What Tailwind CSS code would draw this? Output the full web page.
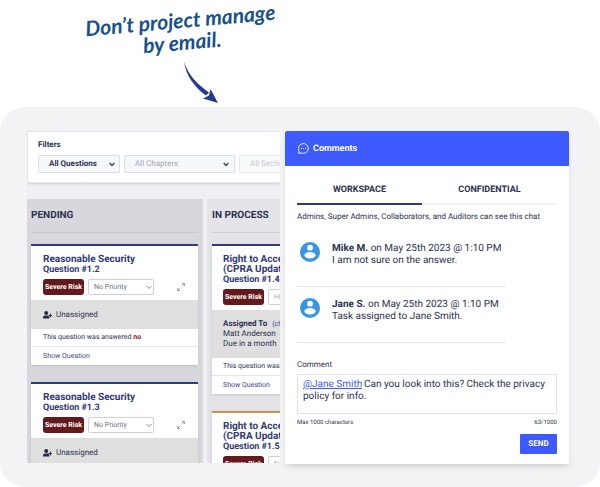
<!DOCTYPE html>
<html lang="en">

<head>
  <meta charset="UTF-8">
  <meta name="viewport" content="width=device-width, initial-scale=1">
  <title>Comments</title>
  <script src="https://cdn.jsdelivr.net/npm/@tailwindcss/browser@4"></script>
</head>

<body class="bg-white font-['Roboto',sans-serif] text-[#2b3150] **:[text-rendering:geometricPrecision]">

  <!-- Callout -->
  <header class="flex h-[107px] w-full max-w-[362px] flex-col items-center pt-[10px]">
    <h1 class="-rotate-5 text-center font-['Lato',sans-serif] text-[21px] leading-[22px] font-bold text-[#17508f] italic">
      Don’t project manage<br>by email.
    </h1>
    <svg class="mt-[8px] ml-[40px] h-[42px] w-[36px]" viewBox="0 0 36 42" fill="none">
      <path d="M1 0C3 13 11 25 23 33.500L26 30.500C14 22 6 14 1 0Z" fill="#233a8f" />
      <path d="M35 41L27.500 27L26 33.500L20 36.500Z" fill="#233a8f" />
    </svg>
  </header>

  <!-- Main Content -->
  <main class="grid grid-cols-[minmax(0,253fr)_minmax(0,284fr)] gap-[5px] rounded-[25px] bg-[#f3f3f5] pt-[24px] pr-[31px] pb-[23px] pl-[27px]">

    <!-- Board -->
    <section class="max-h-[332px] overflow-hidden bg-[#f0f0f4]">
      <form class="overflow-hidden border border-r-0 border-[#e4e4ea] bg-white pt-[8px] pb-[9px] pl-[10px] shadow-sm">
        <h2 class="text-[8px] leading-[10px] font-bold">Filters</h2>
        <div class="mt-[5px] flex w-[320px] gap-[4px]">
          <div class="relative w-[82px]">
            <select aria-label="Questions" class="block h-[18px] w-full appearance-none rounded-[2px] border border-[#dcdde6] bg-[#f6f7fa] pl-[10px] text-[8px] font-bold">
              <option>All Questions</option>
            </select>
            <svg class="pointer-events-none absolute top-[7px] right-[5px] h-[5px] w-[6px]" viewBox="0 0 6 5" fill="none" stroke="#3a4060" stroke-width="1.300"><path d="M.700 1L3 3.500L5.300 1" /></svg>
          </div>
          <div class="relative w-[111px]">
            <select aria-label="Chapters" class="block h-[18px] w-full appearance-none rounded-[2px] border border-[#dcdde6] bg-[#f6f7fa] pl-[10px] text-[8px] text-[#a5a7b8]">
              <option>All Chapters</option>
            </select>
            <svg class="pointer-events-none absolute top-[7px] right-[6px] h-[5px] w-[6px]" viewBox="0 0 6 5" fill="none" stroke="#3a4060" stroke-width="1.300"><path d="M.700 1L3 3.500L5.300 1" /></svg>
          </div>
          <select aria-label="Sections" class="block h-[18px] w-[111px] appearance-none rounded-[2px] border border-[#e6e7ee] bg-[#f8f9fb] pl-[10px] text-[8px] text-[#c6c8d3]">
            <option>All Sections</option>
          </select>
        </div>
      </form>

      <div class="mt-[16px] flex w-[358px] gap-[4px]">

        <!-- Pending -->
        <div class="w-[176px] bg-[#d7d7dc] pr-[5px] pb-4 pl-[4px]">
          <h2 class="h-[34px] border-b border-[#c8c8cf] text-[10px] leading-[33px] font-bold">PENDING</h2>

          <article class="mt-[11px] border-t-2 border-[#2f3c80] bg-white shadow-sm">
            <div class="px-[12px] pt-[9px] pb-[5px]">
              <h3 class="text-[10px] leading-[10px] font-bold text-[#2f3878]">Reasonable Security</h3>
              <p class="text-[9px] leading-[10px] font-bold text-[#2f3878]">Question #1.2</p>
              <div class="mt-[4px] flex items-center">
                <span class="h-[16px] w-[41px] rounded-[3px] bg-[#641a1c] text-center text-[7px] leading-[16px] font-bold text-white">Severe Risk</span>
                <div class="relative ml-[4px] w-[66px]">
                  <select aria-label="Priority of question 1.2" class="block h-[16px] w-full appearance-none rounded-[2px] border border-[#cfd0dc] bg-white pl-[5px] text-[7px] text-[#6b6e80]">
                    <option>No Priority</option>
                  </select>
                  <svg class="pointer-events-none absolute top-[6px] right-[2px] h-[5px] w-[6px]" viewBox="0 0 6 5" fill="none" stroke="#8a8c9c"><path d="M.500 1L3 3.500L5.500 1" /></svg>
                </div>
                <svg class="mr-px ml-auto h-[8px] w-[8px]" viewBox="0 0 8 8" fill="none" stroke="#7d88b4" stroke-width=".8"><path d="M5 .500H7.500V3M7.500 .500L4.800 3.200M.500 5V7.500H3M.500 7.500L3.200 4.800" /></svg>
              </div>
            </div>
            <p class="flex h-[29px] items-center gap-[4px] bg-[#dfdfdf] px-[12px] text-[8px]">
              <svg class="h-[8px] w-[9px]" viewBox="0 0 9 8" fill="#262b45"><circle cx="3.200" cy="2.100" r="2" /><path d="M0 7.500V6.500C0 5 1.200 4.500 3.200 4.500S6.300 5 6.300 6.500V7.500ZM6.800 2.500H7.800V4H9V5H7.800V6.500H6.800V5H5.600V4H6.800Z" /></svg>
              Unassigned
            </p>
            <p class="h-[18px] border-b border-[#e6e6ea] px-[12px] text-[7px] leading-[17px]">This question was answered <b class="text-[#7a2022]">no</b></p>
            <a href="#" class="block h-[18px] px-[12px] text-[7px] leading-[18px] text-[#3b4688]">Show Question</a>
          </article>

          <article class="mt-[17px] border-t-2 border-[#2f3c80] bg-white shadow-sm">
            <div class="px-[12px] pt-[9px] pb-[5px]">
              <h3 class="text-[10px] leading-[10px] font-bold text-[#2f3878]">Reasonable Security</h3>
              <p class="text-[9px] leading-[10px] font-bold text-[#2f3878]">Question #1.3</p>
              <div class="mt-[4px] flex items-center">
                <span class="h-[16px] w-[41px] rounded-[3px] bg-[#641a1c] text-center text-[7px] leading-[16px] font-bold text-white">Severe Risk</span>
                <div class="relative ml-[4px] w-[66px]">
                  <select aria-label="Priority of question 1.3" class="block h-[16px] w-full appearance-none rounded-[2px] border border-[#cfd0dc] bg-white pl-[5px] text-[7px] text-[#6b6e80]">
                    <option>No Priority</option>
                  </select>
                  <svg class="pointer-events-none absolute top-[6px] right-[2px] h-[5px] w-[6px]" viewBox="0 0 6 5" fill="none" stroke="#8a8c9c"><path d="M.500 1L3 3.500L5.500 1" /></svg>
                </div>
                <svg class="mr-px ml-auto h-[8px] w-[8px]" viewBox="0 0 8 8" fill="none" stroke="#7d88b4" stroke-width=".8"><path d="M5 .500H7.500V3M7.500 .500L4.800 3.200M.500 5V7.500H3M.500 7.500L3.200 4.800" /></svg>
              </div>
            </div>
            <p class="flex h-[29px] items-center gap-[4px] bg-[#dfdfdf] px-[12px] text-[8px]">
              <svg class="h-[8px] w-[9px]" viewBox="0 0 9 8" fill="#262b45"><circle cx="3.200" cy="2.100" r="2" /><path d="M0 7.500V6.500C0 5 1.200 4.500 3.200 4.500S6.300 5 6.300 6.500V7.500ZM6.800 2.500H7.800V4H9V5H7.800V6.500H6.800V5H5.600V4H6.800Z" /></svg>
              Unassigned
            </p>
          </article>
        </div>

        <!-- In process -->
        <div class="w-[176px] bg-[#e3e3e8] pr-[5px] pl-[5px]">
          <h2 class="h-[34px] border-b border-[#cfcfd6] text-[10px] leading-[33px] font-bold">IN PROCESS</h2>

          <article class="mt-[11px] border-t-2 border-[#2f3c80] bg-white shadow-sm">
            <div class="pt-[9px] pb-[5px] pl-[11px]">
              <h3 class="text-[10px] leading-[10px] font-bold text-[#2f3878]">Right to Access<br>(CPRA Update)</h3>
              <p class="text-[9px] leading-[10px] font-bold text-[#2f3878]">Question #1.4</p>
              <div class="mt-[4px] flex items-center">
                <span class="h-[16px] w-[41px] rounded-[3px] bg-[#641a1c] text-center text-[7px] leading-[16px] font-bold text-white">Severe Risk</span>
                <select aria-label="Priority of question 1.4" class="ml-[4px] h-[16px] w-[66px] appearance-none rounded-[2px] border border-[#cfd0dc] bg-white pl-[5px] text-[7px] text-[#a5a7b8]">
                  <option>High</option>
                </select>
              </div>
            </div>
            <div class="h-[48px] bg-[#dfdfdf] pt-[9px] pl-[11px] text-[8px] leading-[10px]">
              <p><b>Assigned To</b> <a href="#" class="ml-[3px] text-[7px] text-[#3b4688]">(change)</a></p>
              <p>Matt Anderson</p>
              <p>Due in a month</p>
            </div>
            <p class="h-[18px] border-b border-[#e6e6ea] pl-[11px] text-[7px] leading-[17px]">This question was answered</p>
            <a href="#" class="block h-[18px] pl-[11px] text-[7px] leading-[18px] text-[#3b4688]">Show Question</a>
          </article>

          <article class="mt-[17px] border-t-2 border-[#c0954f] bg-white shadow-sm">
            <div class="pt-[9px] pb-[5px] pl-[11px]">
              <h3 class="text-[10px] leading-[10px] font-bold text-[#2f3878]">Right to Access<br>(CPRA Update)</h3>
              <p class="text-[9px] leading-[10px] font-bold text-[#2f3878]">Question #1.5</p>
              <div class="mt-[4px] flex items-center">
                <span class="h-[16px] w-[41px] rounded-[3px] bg-[#641a1c] text-center text-[7px] leading-[16px] font-bold text-white">Severe Risk</span>
                <select aria-label="Priority of question 1.5" class="ml-[4px] h-[16px] w-[66px] appearance-none rounded-[2px] border border-[#cfd0dc] bg-white pl-[5px] text-[7px] text-[#a5a7b8]">
                  <option>No Priority</option>
                </select>
              </div>
            </div>
          </article>
        </div>
      </div>
    </section>

    <!-- Comments -->
    <section class="rounded-[2px] bg-white pb-[10px] shadow-md">
      <div class="flex h-[35px] items-center gap-[4px] rounded-t-[2px] bg-[#3d5afe] pl-[13px] text-white">
        <svg class="h-[11px] w-[11px]" viewBox="0 0 11 11" fill="none" stroke="currentColor" stroke-width=".9"><path d="M.600 10.400L1.100 7.900A4.900 4.900 0 1 1 3.300 9.900Z" stroke-linejoin="round" /><path d="M3.100 5.500H4M5.100 5.500H6M7.100 5.500H8" /></svg>
        <h2 class="text-[9px] leading-[12px] font-bold">Comments</h2>
      </div>

      <div class="px-[12px]">
        <div class="mt-[12px] grid grid-cols-[125fr_135fr] text-[9px] font-bold">
          <button type="button" class="h-[27px] border-b-2 border-[#2f3980]">WORKSPACE</button>
          <button type="button" class="h-[27px] border-b-2 border-[#f3f3f6]">CONFIDENTIAL</button>
        </div>
        <p class="mt-[7px] text-[8px] leading-[10px]">Admins, Super Admins, Collaborators, and Auditors can see this chat</p>

        <div class="mr-[51px]">
          <div class="flex h-[65px] gap-[12px] border-b border-[#e6e6ea] pt-[20px] pl-[3px]">
            <svg class="h-[20px] w-[20px] shrink-0" viewBox="0 0 20 20"><circle cx="10" cy="10" r="10" fill="#3797e4" /><circle cx="10" cy="5.700" r="2.900" fill="#fff" /><ellipse cx="10" cy="13.300" rx="5.600" ry="3.200" fill="#fff" /></svg>
            <p class="pt-px text-[10px] leading-[12px] whitespace-nowrap"><b>Mike M.</b> on May 25th 2023 @ 1:10 PM<br>I am not sure on the answer.</p>
          </div>
          <div class="flex h-[56px] gap-[12px] border-b border-[#e6e6ea] pt-[11px] pl-[3px]">
            <svg class="h-[20px] w-[20px] shrink-0" viewBox="0 0 20 20"><circle cx="10" cy="10" r="10" fill="#3797e4" /><circle cx="10" cy="5.700" r="2.900" fill="#fff" /><ellipse cx="10" cy="13.300" rx="5.600" ry="3.200" fill="#fff" /></svg>
            <p class="pt-px text-[10px] leading-[12px] whitespace-nowrap"><b>Jane S.</b> on May 25th 2023 @ 1:10 PM<br>Task assigned to Jane Smith.</p>
          </div>
        </div>

        <form class="mt-[17px]">
          <label for="comment" class="block text-[8px] leading-[10px]">Comment</label>
          <div class="relative mt-[4px] text-[10px] leading-[12px]">
            <textarea id="comment" class="block h-[40px] w-full resize-none overflow-hidden border border-[#e2e2e6] px-[5px] pt-[4px] indent-[61px]">Can you look into this? Check the privacy policy for info.</textarea>
            <a href="#" class="absolute top-[5px] left-[6px] text-[#3d5afe] underline">@Jane Smith</a>
          </div>
          <div class="mt-[4px] flex justify-between text-[6px] leading-[10px]">
            <span>Max 1000 characters</span>
            <span>63/1000</span>
          </div>
          <div class="mt-[6px] flex justify-end">
            <button type="submit" class="h-[20px] w-[37px] rounded-[1px] bg-[#3d5afe] text-[8px] font-bold text-white">SEND</button>
          </div>
        </form>
      </div>
    </section>
  </main>

</body>

</html>
